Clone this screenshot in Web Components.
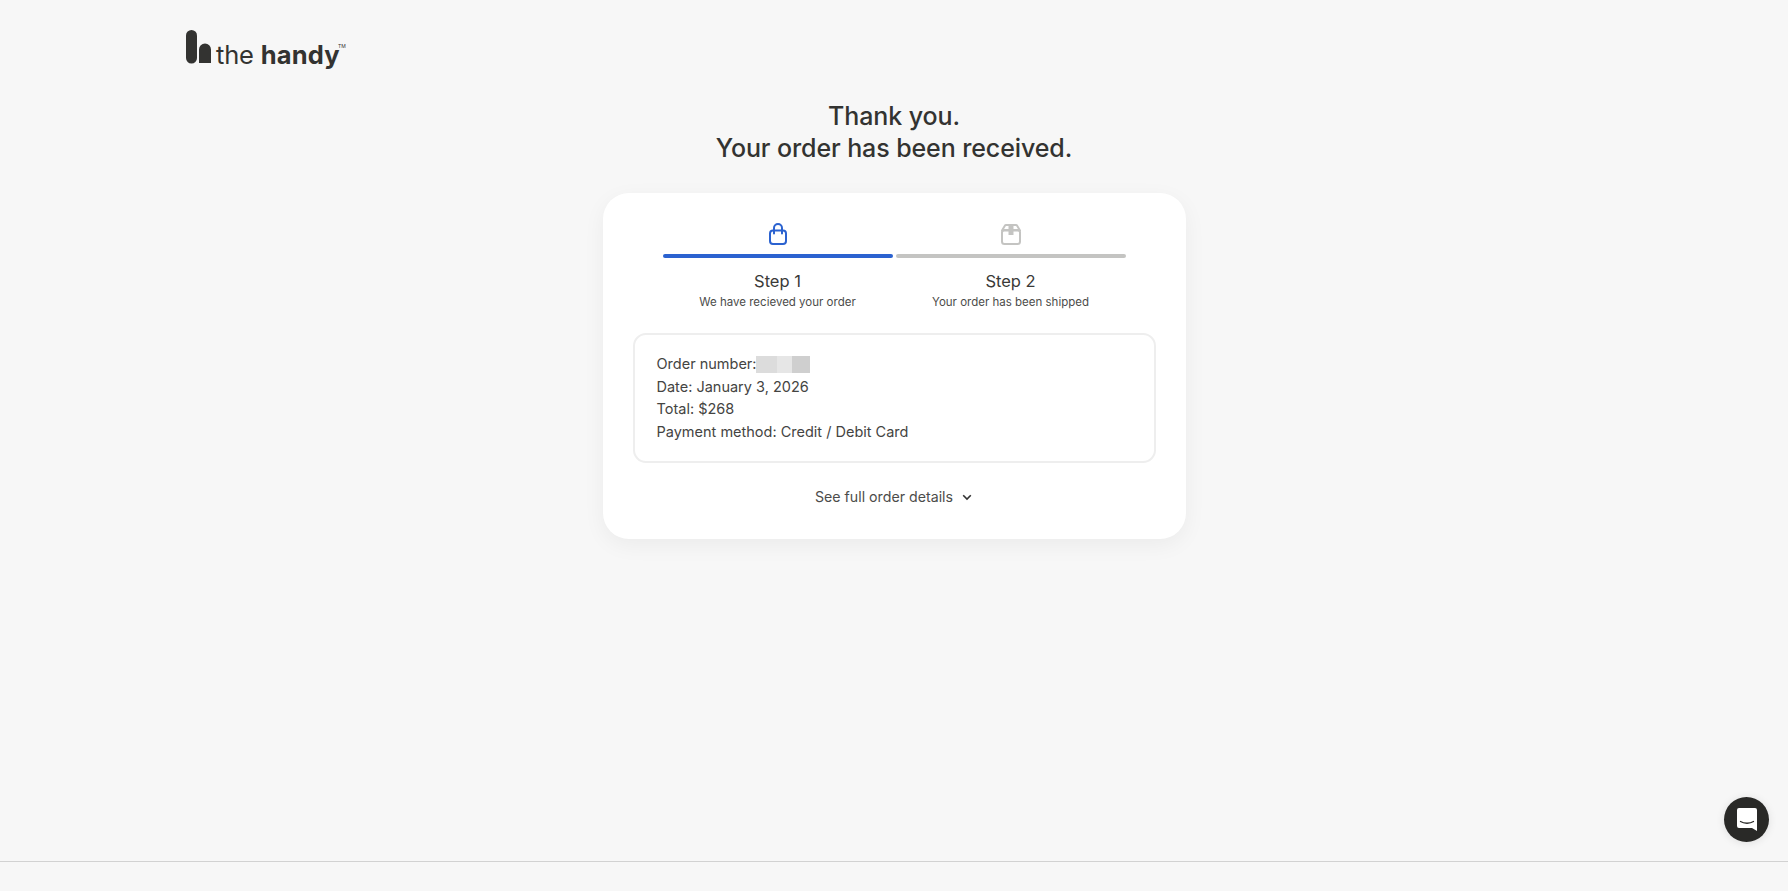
<!DOCTYPE html>
<html lang="en"><head><meta charset="utf-8"><title>Thank you</title>
<style>
html,body{margin:0;height:100%}
body{background:#f7f7f7;font-family:Inter,"Noto Sans",sans-serif;color:#333331;overflow:hidden}
</style></head><body>
<thank-page>
  <brand-logo slot="logo"></brand-logo>
  <span slot="title">Thank you.<br>Your order has been received.</span>
  <order-card slot="card">
    <order-step slot="steps" active label="Step 1" note="We have recieved your order">
      <svg viewBox="0 0 24 24" width="24" height="24" fill="none" stroke="currentColor" stroke-width="2" stroke-linejoin="round" stroke-linecap="round"><rect x="4" y="8.500" width="16" height="13.500" rx="3"/><path d="M8 11.500V6a4 4 0 0 1 8 0v5.500"/></svg>
    </order-step>
    <order-step slot="steps" label="Step 2" note="Your order has been shipped">
      <svg viewBox="0 0 24 24" width="24" height="24" fill="none" stroke="currentColor" stroke-width="2" stroke-linejoin="round"><rect x="3" y="8" width="18" height="14" rx="2.500"/><path d="M3 8.500 6 3.500a1.500 1.500 0 0 1 1-.5h10a1.500 1.500 0 0 1 1 .5l3 5z"/><path d="M9.500 3h5v10h-5z" fill="currentColor" stroke="none"/></svg>
    </order-step>
    <order-summary slot="summary">
      <div>Order number:<redacted-value></redacted-value></div>
      <div>Date: January 3, 2026</div>
      <div>Total: $268</div>
      <div>Payment method: Credit / Debit Card</div>
    </order-summary>
    <details-toggle slot="toggle">See full order details</details-toggle>
  </order-card>
</thank-page>
<page-footer></page-footer>
<chat-launcher></chat-launcher>
<script>
function def(name,html,init){customElements.define(name,class extends HTMLElement{
  constructor(){super();const r=this.attachShadow({mode:'open'});r.innerHTML=html;}
  connectedCallback(){init&&init(this,this.shadowRoot);}
});}
def('thank-page',`<style>
:host{display:block;height:861px;box-sizing:border-box;padding:30px 186px 0}
.logo{height:40px}
h1{margin:30px 0 0;font:500 25px/32px Inter,"Noto Sans",sans-serif;text-align:center;color:#333331;letter-spacing:-.1px}
.card{display:flex;justify-content:center;margin-top:29px}
</style><div class="logo"><slot name="logo"></slot></div><h1><slot name="title"></slot></h1><div class="card"><slot name="card"></slot></div>`);
def('brand-logo',`<style>
:host{display:flex;align-items:flex-start;gap:5px;height:40px;color:#333331}
svg{display:block;flex:none}
.t{font:400 25.500px/30px Inter,"Noto Sans",sans-serif;letter-spacing:-.2px;margin-top:10px;white-space:nowrap}
b{font-weight:700;letter-spacing:.2px}
sup{font-size:5px;line-height:5px;vertical-align:top;position:relative;top:4px;letter-spacing:0;margin-left:-2px}
</style><svg width="25" height="34" viewBox="0 0 25 34" fill="#333331"><path d="M0 5.500a5.500 5.500 0 0 1 11 0v22.500a5.500 5.500 0 0 1-11 0z"/><path d="M13 19.500a6 6 0 0 1 12 0V33H13z"/></svg><div class="t">the <b>handy</b><sup>TM</sup></div>`);
def('order-card',`<style>
:host{display:block;box-sizing:border-box;width:583px;height:346px;background:#fff;border-radius:26px;box-shadow:0 6px 22px rgba(0,0,0,.05);padding:29px 30px 0}
.steps{display:grid;grid-template-columns:230px 230px;gap:3px;justify-content:center}
.sum{margin-top:22px}
.tog{margin-top:24px;display:flex;justify-content:center}
</style><div class="steps"><slot name="steps"></slot></div><div class="sum"><slot name="summary"></slot></div><div class="tog"><slot name="toggle"></slot></div>`);
def('order-step',`<style>
:host{display:flex;flex-direction:column;align-items:center;color:#c4c4c2}
:host([active]){color:#2b62d0}
.i{height:24px;display:flex;margin-bottom:8px}
.bar{align-self:stretch;height:4px;border-radius:2px;background:currentColor}
.l{margin-top:12px;font:400 16.500px/22px Inter,"Noto Sans",sans-serif;color:#3a3a38}
.n{margin-top:1px;font:400 11.500px/18px Inter,"Noto Sans",sans-serif;color:#4c4c4a}
</style><div class="i"><slot></slot></div><div class="bar"></div><div class="l"></div><div class="n"></div>`,(h,r)=>{
  r.querySelector('.l').textContent=h.getAttribute('label');r.querySelector('.n').textContent=h.getAttribute('note');});
def('order-summary',`<style>
:host{display:block;box-sizing:border-box;height:130px;border:2px solid #eeeeee;border-radius:13px;padding:18px 22px;font:400 14.500px/22.700px Inter,"Noto Sans",sans-serif;color:#444442}
</style><slot></slot>`);
def('redacted-value',`<style>
:host{display:inline-block;vertical-align:-4px;width:54px;height:17px;margin-left:-1px;background:linear-gradient(90deg,#dcdcdc 0 38%,#e6e6e6 38% 66%,#cfcfcf 66%)}
</style>`);
def('details-toggle',`<style>
:host{display:flex;align-items:center;gap:8px;font:400 14.200px/20px Inter,"Noto Sans",sans-serif;color:#4c4c4a}
</style><slot></slot><svg width="12" height="12" viewBox="0 0 12 12" fill="none" stroke="#333" stroke-width="1.600"><path d="M2.200 4.200 6 8l3.800-3.800"/></svg>`);
def('page-footer',`<style>
:host{display:block;height:30px;box-sizing:border-box;border-top:1px solid #d2d2d2}
</style>`);
def('chat-launcher',`<style>
:host{position:fixed;left:1724px;top:797px;width:45px;height:45px;border-radius:50%;background:#292927;display:flex;align-items:center;justify-content:center;box-shadow:0 1px 8px rgba(0,0,0,.1)}
</style><svg width="20" height="23" viewBox="0 0 20 23"><path fill="#fff" d="M2 0h16a2 2 0 0 1 2 2v21l-5-3H2a2 2 0 0 1-2-2V2a2 2 0 0 1 2-2z"/><path d="M3.500 13.500c3.500 2.300 9.500 2.300 13 0" fill="none" stroke="#292927" stroke-width="1.300" stroke-linecap="round"/></svg>`);
</script>
</body></html>
